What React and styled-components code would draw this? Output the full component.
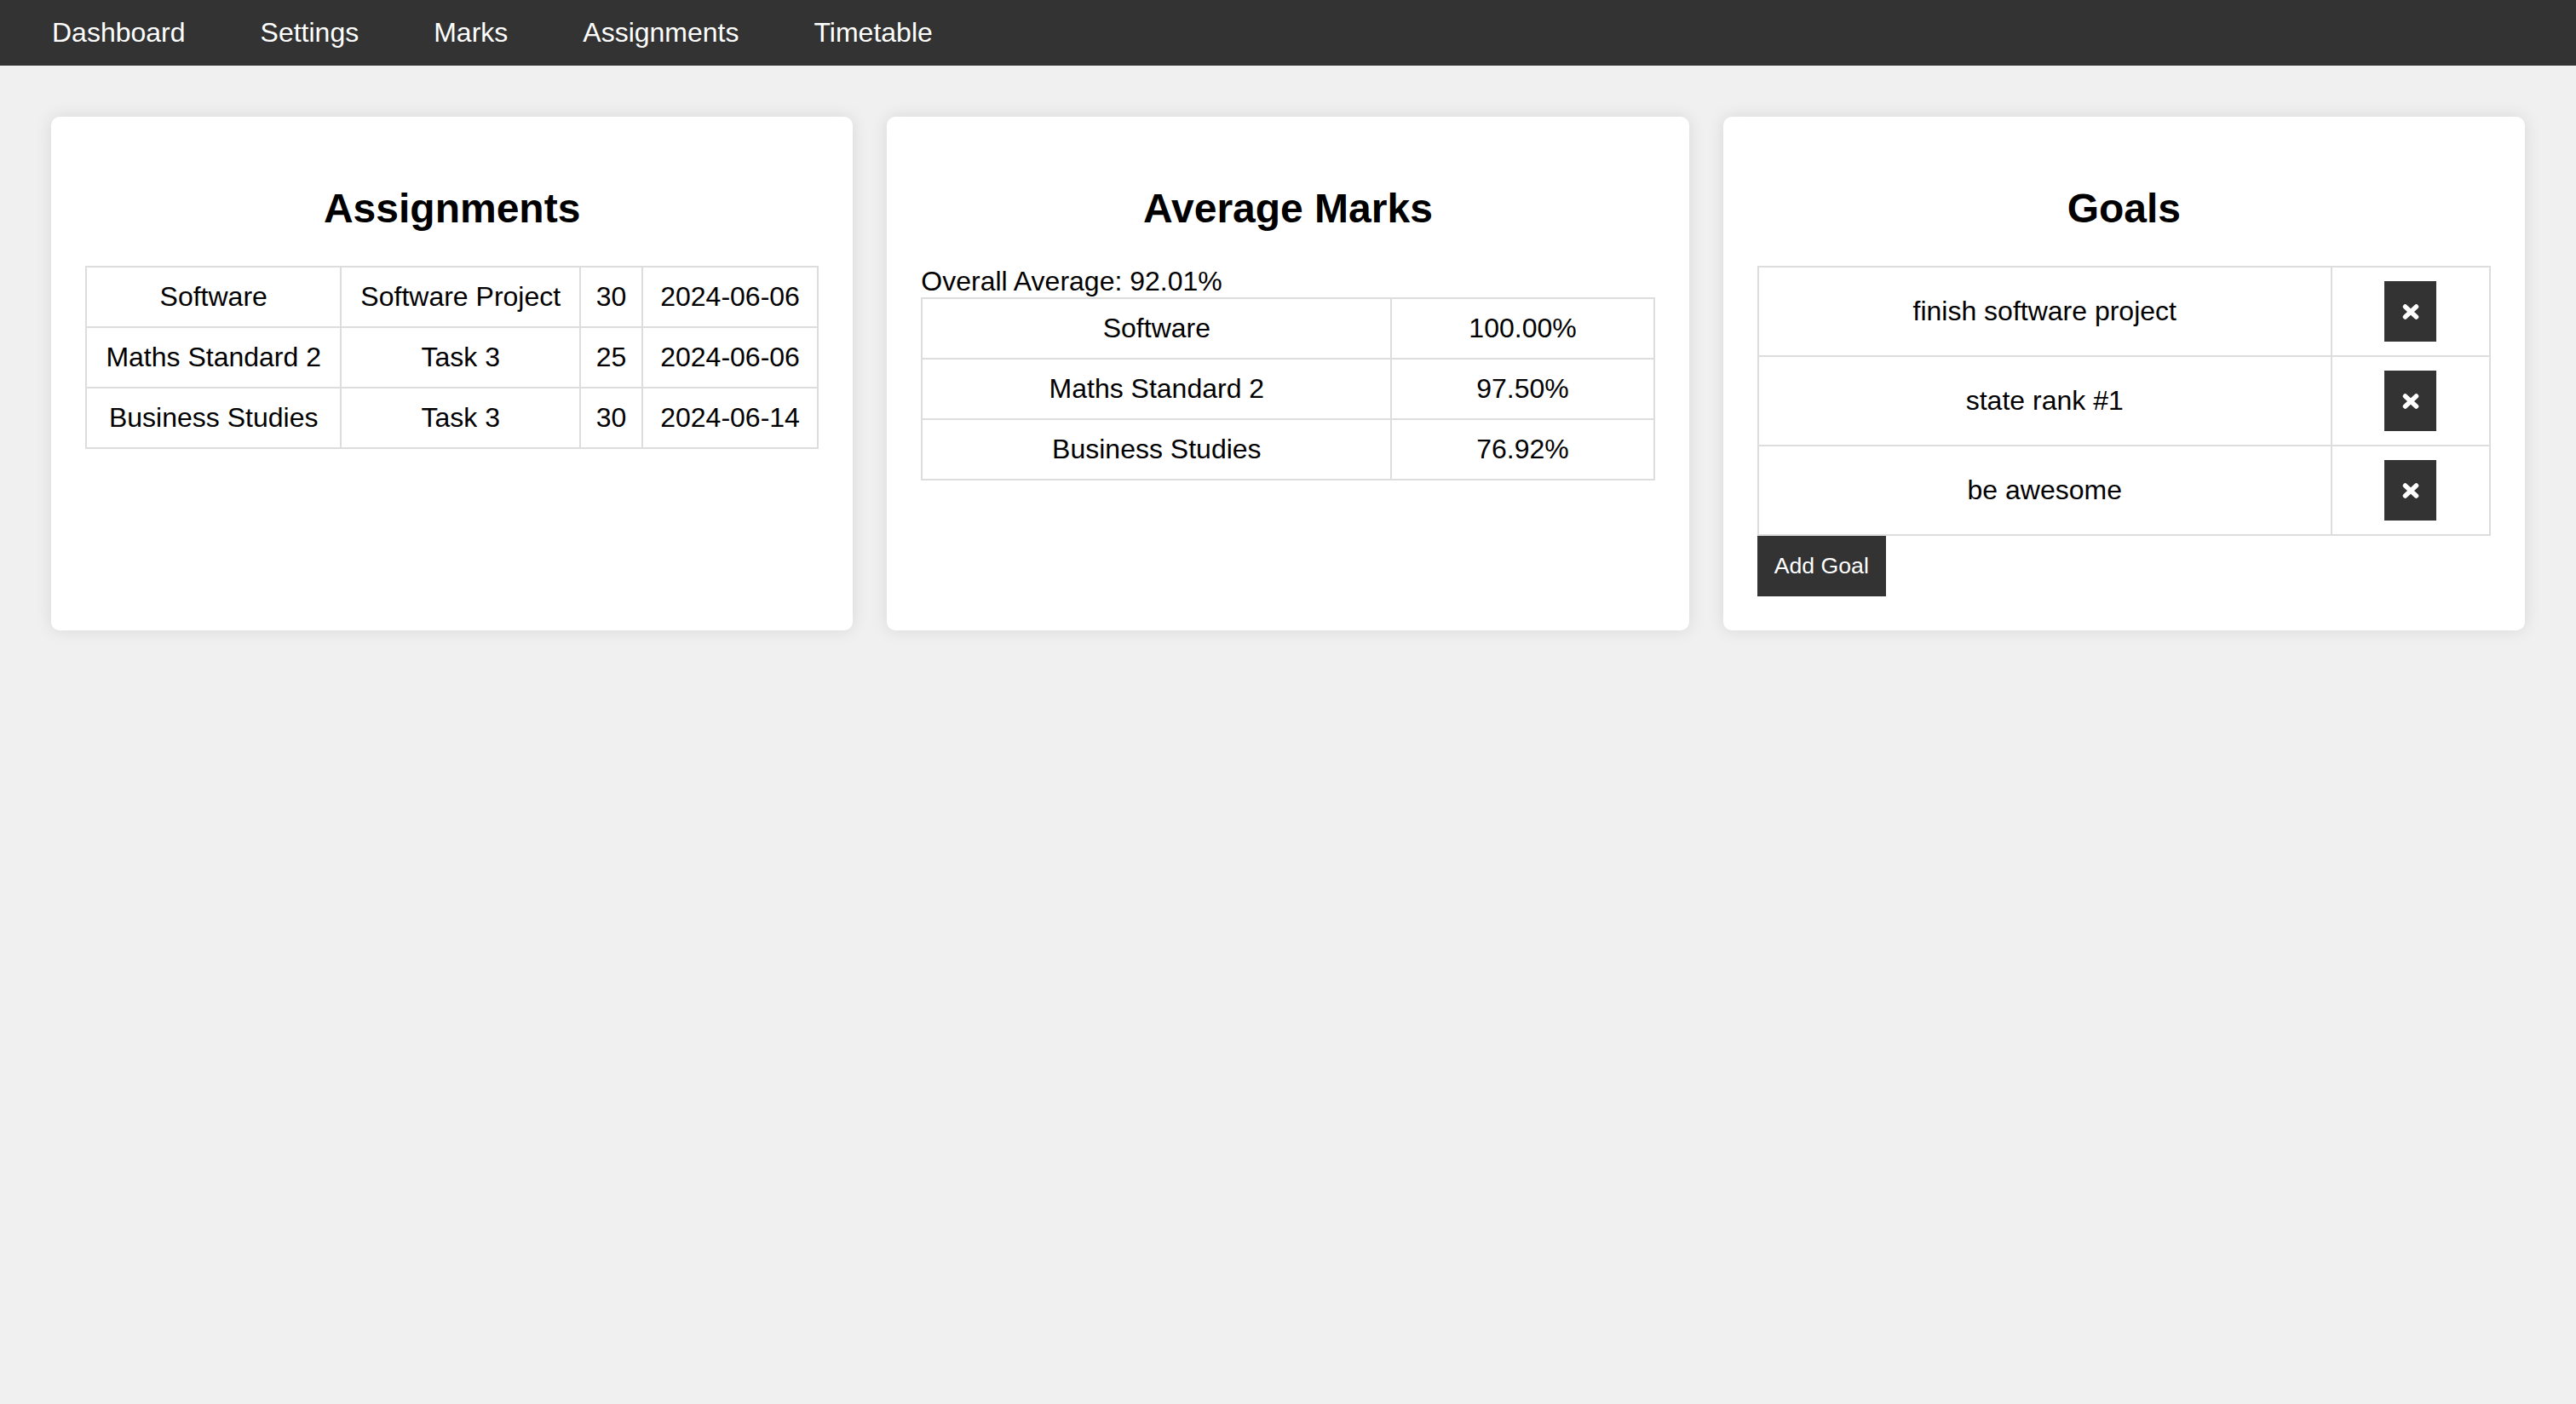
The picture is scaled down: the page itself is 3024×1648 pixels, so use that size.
import styled, { createGlobalStyle } from 'styled-components'

const assignments = [
  { subject: 'Software', task: 'Software Project', weight: 30, due: '2024-06-06' },
  { subject: 'Maths Standard 2', task: 'Task 3', weight: 25, due: '2024-06-06' },
  { subject: 'Business Studies', task: 'Task 3', weight: 30, due: '2024-06-14' },
]

const marks = [
  { subject: 'Software', average: '100.00%' },
  { subject: 'Maths Standard 2', average: '97.50%' },
  { subject: 'Business Studies', average: '76.92%' },
]

const goals = ['finish software project', 'state rank #1', 'be awesome']

const navLinks = ['Dashboard', 'Settings', 'Marks', 'Assignments', 'Timetable']

function CrossIcon() {
  return (
    <svg width="20" height="18" viewBox="0 0 20 18">
      <path
        d="M3.5 3 L16.5 15 M16.5 3 L3.5 15"
        stroke="#fff"
        strokeWidth="5.5"
        strokeLinecap="round"
      />
    </svg>
  )
}

function App() {
  return (
    <>
      <GlobalStyle />
      <Nav>
        {navLinks.map(link => (
          <NavLink key={link} href="#">
            {link}
          </NavLink>
        ))}
      </Nav>
      <Main>
        <Card>
          <Title>Assignments</Title>
          <Table>
            <tbody>
              {assignments.map(item => (
                <tr key={item.subject}>
                  <Cell>{item.subject}</Cell>
                  <Cell>{item.task}</Cell>
                  <Cell>{item.weight}</Cell>
                  <Cell>{item.due}</Cell>
                </tr>
              ))}
            </tbody>
          </Table>
        </Card>

        <Card>
          <Title>Average Marks</Title>
          <Overall>Overall Average: 92.01%</Overall>
          <Table>
            <tbody>
              {marks.map(item => (
                <tr key={item.subject}>
                  <Cell>{item.subject}</Cell>
                  <Cell>{item.average}</Cell>
                </tr>
              ))}
            </tbody>
          </Table>
        </Card>

        <Card>
          <Title>Goals</Title>
          <Table>
            <tbody>
              {goals.map(goal => (
                <tr key={goal}>
                  <Cell>{goal}</Cell>
                  <Cell>
                    <RemoveButton aria-label="Remove goal">
                      <CrossIcon />
                    </RemoveButton>
                  </Cell>
                </tr>
              ))}
            </tbody>
          </Table>
          <Button>Add Goal</Button>
        </Card>
      </Main>
    </>
  )
}

const GlobalStyle = createGlobalStyle`
  html, body {
    margin: 0;
    min-height: 100%;
    background: #f0f0f0;
  }
  body {
    font-family: "Liberation Sans", Arial, sans-serif;
    min-height: 100vh;
  }
`

const Nav = styled.nav`
  display: flex;
  align-items: center;
  gap: 88px;
  height: 77px;
  padding-left: 61px;
  background: #333333;
`

const NavLink = styled.a`
  color: #ffffff;
  font-size: 32px;
  text-decoration: none;
`

const Main = styled.main`
  display: grid;
  grid-template-columns: repeat(3, 1fr);
  gap: 40px;
  padding: 60px;
  align-items: stretch;
`

const Card = styled.section`
  background: #ffffff;
  border-radius: 10px;
  padding: 40px;
  box-shadow: 0 0 20px rgba(0, 0, 0, 0.1);
`

const Title = styled.h2`
  margin: 40px 0;
  font-size: 48px;
  font-weight: bold;
  text-align: center;
  color: #000;
`

const Overall = styled.div`
  font-size: 32px;
  color: #000;
`

const Table = styled.table`
  width: 100%;
  border-collapse: collapse;
  font-size: 32px;
  color: #000;
`

const Cell = styled.td`
  border: 2px solid #dddddd;
  padding: 16px;
  text-align: center;
`

const Button = styled.button`
  display: inline-block;
  padding: 20px;
  border: none;
  background: #333333;
  color: #ffffff;
  font-family: inherit;
  font-size: 26.67px;
  cursor: pointer;
`

const RemoveButton = styled.button`
  display: inline-flex;
  align-items: center;
  justify-content: center;
  width: 61px;
  height: 71px;
  padding: 0;
  border: none;
  background: #333333;
  cursor: pointer;
  vertical-align: middle;
`

export default App
